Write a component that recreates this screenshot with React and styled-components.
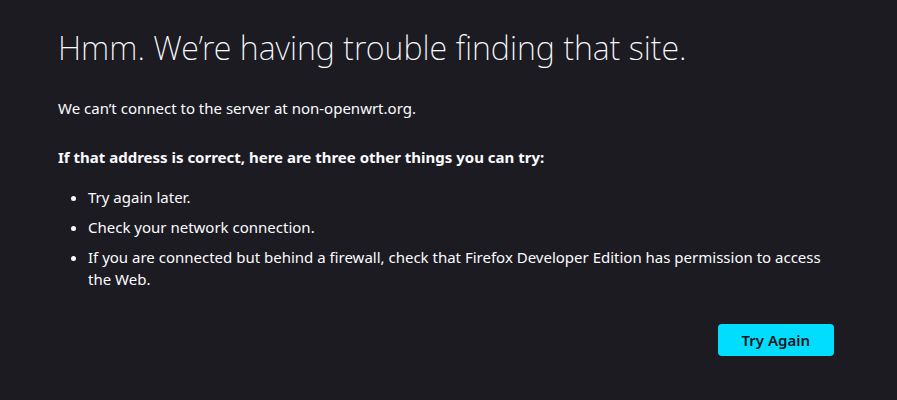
import React from "react";
import styled, { createGlobalStyle } from "styled-components";

const Global = createGlobalStyle`
  html, body { margin: 0; padding: 0; background: #1c1b22; }
  body { font-family: "Noto Sans", "Open Sans", sans-serif; color: #fbfbfe; font-size: 15px; }
`;

const Page = styled.div`
  box-sizing: border-box;
  width: 897px;
  height: 400px;
  padding: 24px 0 0 58px;
`;

const Container = styled.div`
  width: 776px;
  display: flex;
  flex-direction: column;
`;

const Title = styled.h1`
  margin: 0;
  font-family: "Noto Sans", "Open Sans", sans-serif;
  font-weight: 200;
  font-size: 32.4px;
  line-height: 46px;
  color: #fbfbfe;
`;

const Para = styled.p`
  margin: ${(p) => p.$mt || 0}px 0 0 0;
  font-size: 15px;
  line-height: 22px;
  font-weight: ${(p) => (p.$bold ? 700 : 400)};
`;

const List = styled.ul`
  margin: 18px 0 0 0;
  padding-left: 30px;
  display: flex;
  flex-direction: column;
  gap: 8px;
`;

const Item = styled.li`
  font-size: 15px;
  line-height: 22px;
`;

const Actions = styled.div`
  display: flex;
  justify-content: flex-end;
  margin-top: 34px;
`;

const Button = styled.button`
  background: #00ddff;
  color: #15141a;
  border: none;
  border-radius: 4px;
  height: 32px;
  padding: 0 24px;
  font-family: "Noto Sans", "Open Sans", sans-serif;
  font-weight: 600;
  font-size: 15px;
  cursor: pointer;
`;

export default function App() {
  return (
    <>
      <Global />
      <Page>
        <Container>
          <Title>Hmm. We’re having trouble finding that site.</Title>
          <Para $mt={27}>We can’t connect to the server at non-openwrt.org.</Para>
          <Para $mt={27} $bold>
            If that address is correct, here are three other things you can try:
          </Para>
          <List>
            <Item>Try again later.</Item>
            <Item>Check your network connection.</Item>
            <Item>
              If you are connected but behind a firewall, check that Firefox Developer Edition
              has permission to access the Web.
            </Item>
          </List>
          <Actions>
            <Button>Try Again</Button>
          </Actions>
        </Container>
      </Page>
    </>
  );
}
